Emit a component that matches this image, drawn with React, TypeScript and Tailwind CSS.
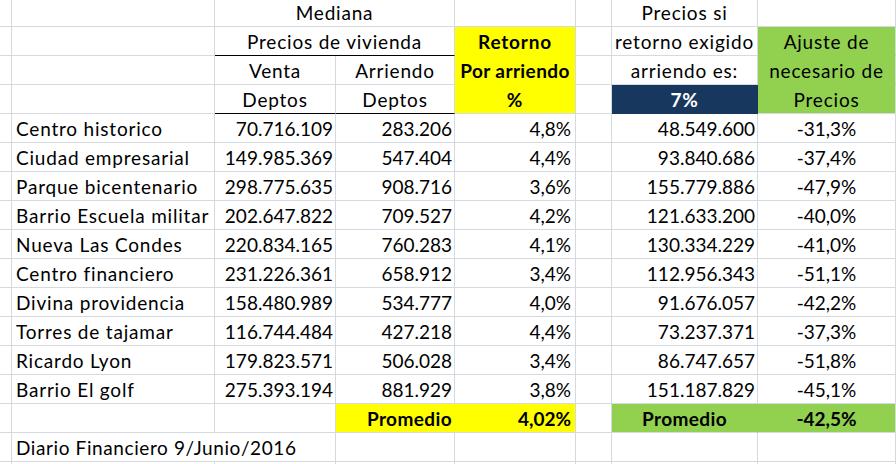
import React from "react";

const rows = [
  ["Centro historico", "70.716.109", "283.206", "4,8%", "48.549.600", "-31,3%"],
  ["Ciudad empresarial", "149.985.369", "547.404", "4,4%", "93.840.686", "-37,4%"],
  ["Parque bicentenario", "298.775.635", "908.716", "3,6%", "155.779.886", "-47,9%"],
  ["Barrio Escuela militar", "202.647.822", "709.527", "4,2%", "121.633.200", "-40,0%"],
  ["Nueva Las Condes", "220.834.165", "760.283", "4,1%", "130.334.229", "-41,0%"],
  ["Centro financiero", "231.226.361", "658.912", "3,4%", "112.956.343", "-51,1%"],
  ["Divina providencia", "158.480.989", "534.777", "4,0%", "91.676.057", "-42,2%"],
  ["Torres de tajamar", "116.744.484", "427.218", "4,4%", "73.237.371", "-37,3%"],
  ["Ricardo Lyon", "179.823.571", "506.028", "3,4%", "86.747.657", "-51,8%"],
  ["Barrio El golf", "275.393.194", "881.929", "3,8%", "151.187.829", "-45,1%"],
];

// base cell: gridline on right + bottom, text sits on the bottom like Excel
const base = "flex items-end pb-[2px] leading-[22px] whitespace-nowrap border-r border-b border-[#d5d9e0]";

function Cell({ children, className = "" }: { children?: React.ReactNode; className?: string }) {
  return <div className={`${base} ${className}`}>{children}</div>;
}

export default function App() {
  return (
    <div
      className="w-[896px] h-[464px] overflow-hidden bg-white text-black text-[19px] tracking-[0.8px]"
      style={{ fontFamily: "Lato, 'Liberation Sans', sans-serif" }}
    >
      <div className="grid grid-cols-[12px_203px_121px_119px_121px_36px_146px_1fr] grid-rows-[27px_repeat(16,29px)]">
        {/* header row 0 */}
        <Cell />
        <Cell />
        <Cell className="col-span-2 justify-center">Mediana</Cell>
        <Cell />
        <Cell />
        <Cell className="justify-center">Precios si</Cell>
        <Cell />

        {/* header row 1 */}
        <Cell />
        <Cell />
        <Cell className="col-span-2 justify-center border-b-black">Precios de vivienda</Cell>
        <Cell className="justify-center font-bold bg-[#ffff00] border-b-[#ffff00]">Retorno</Cell>
        <Cell />
        <Cell className="justify-center">retorno exigido</Cell>
        <Cell className="justify-center bg-[#92d050] border-b-[#92d050]">Ajuste de</Cell>

        {/* header row 2 */}
        <Cell />
        <Cell />
        <Cell className="justify-center">Venta</Cell>
        <Cell className="justify-center">Arriendo</Cell>
        <Cell className="justify-center font-bold bg-[#ffff00] border-b-[#ffff00] tracking-[0.4px]">Por arriendo</Cell>
        <Cell />
        <Cell className="justify-center">arriendo es:</Cell>
        <Cell className="justify-center bg-[#92d050] border-b-[#92d050]">necesario de</Cell>

        {/* header row 3 */}
        <Cell />
        <Cell />
        <Cell className="justify-center border-b-black">Deptos</Cell>
        <Cell className="justify-center border-b-black">Deptos</Cell>
        <Cell className="justify-center font-bold bg-[#ffff00]">%</Cell>
        <Cell />
        <Cell className="justify-center font-bold text-white bg-[#17375e] border-r-[#17375e] border-b-[#17375e]">7%</Cell>
        <Cell className="justify-center bg-[#92d050]">Precios</Cell>

        {/* data */}
        {rows.map((r) => (
          <React.Fragment key={r[0]}>
            <Cell />
            <Cell className="pl-[4px]">{r[0]}</Cell>
            <Cell className="justify-end pr-[2px] tracking-normal">{r[1]}</Cell>
            <Cell className="justify-end pr-[2px] tracking-normal">{r[2]}</Cell>
            <Cell className="justify-end pr-[4px] tracking-normal">{r[3]}</Cell>
            <Cell />
            <Cell className="justify-end pr-[2px] tracking-normal">{r[4]}</Cell>
            <Cell className="justify-center tracking-normal">{r[5]}</Cell>
          </React.Fragment>
        ))}

        {/* promedio */}
        <Cell />
        <Cell />
        <Cell />
        <Cell className="justify-end pr-[2px] font-bold bg-[#ffff00] border-r-[#ffff00] tracking-[0.4px]">Promedio</Cell>
        <Cell className="justify-end pr-[4px] font-bold bg-[#ffff00] tracking-normal">4,02%</Cell>
        <Cell />
        <Cell className="justify-center font-bold bg-[#92d050] border-r-[#92d050] tracking-[0.4px]">Promedio</Cell>
        <Cell className="justify-center font-bold bg-[#92d050] tracking-normal">-42,5%</Cell>

        {/* source */}
        <Cell />
        <Cell className="col-span-2 pl-[4px] tracking-[0.6px]">Diario Financiero 9/Junio/2016</Cell>
        <Cell />
        <Cell />
        <Cell />
        <Cell />
        <Cell />

        {/* partial row */}
        <Cell />
        <Cell />
        <Cell />
        <Cell />
        <Cell />
        <Cell />
        <Cell />
        <Cell />
      </div>
    </div>
  );
}
